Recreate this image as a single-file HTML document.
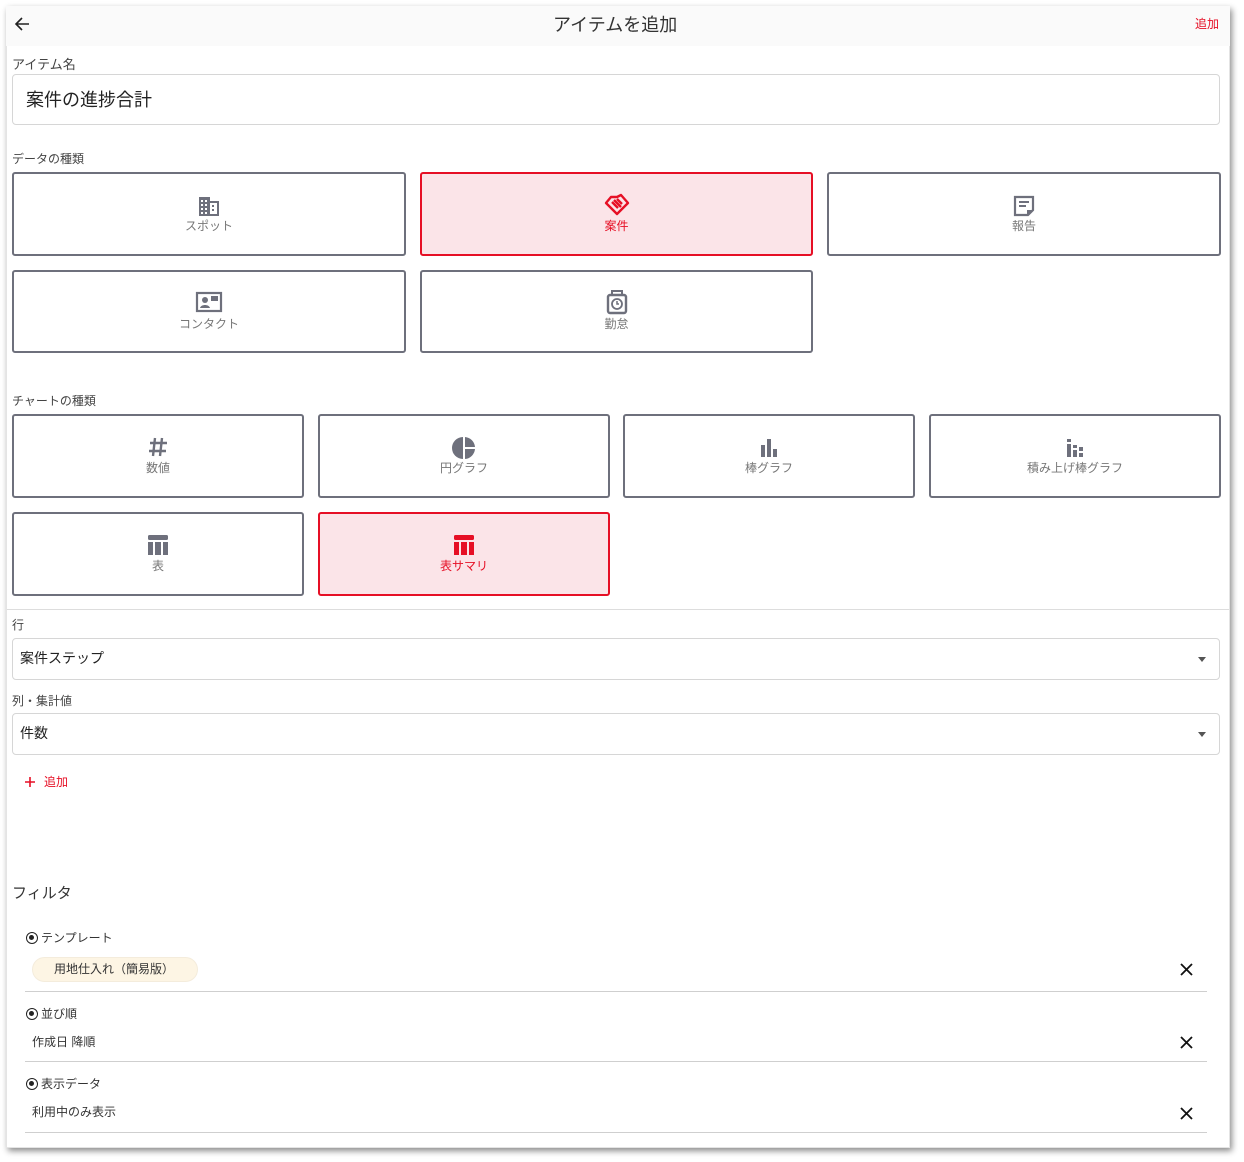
<!DOCTYPE html>
<html><head><meta charset="utf-8"><style>
*{margin:0;padding:0;box-sizing:border-box}
body{width:1244px;height:1162px;background:#fff;position:relative;overflow:hidden;font-family:"Liberation Sans","Noto Sans CJK JP",sans-serif;color:#333}
.card{position:absolute;left:6px;top:6px;width:1224px;height:1142px;background:#fff;box-shadow:2px 3px 6px rgba(0,0,0,.45);border:1px solid #e4e4e4}
.hdr{position:absolute;left:6px;top:6px;width:1224px;height:40px;background:#fafafa}
.a{position:absolute;white-space:nowrap}
.lbl{font-size:12px;color:#444}
.box{position:absolute;border:2px solid #6e707c;border-radius:3px;background:#fff;text-align:center;color:#777;font-size:12px}
.box.sel{border-color:#e60f25;background:#fbe4e8;color:#e60f25}
.box svg{position:absolute;left:50%;transform:translateX(-50%)}
.box span{position:absolute;left:0;right:0}
.sel-in{position:absolute;left:12px;width:1208px;height:42px;border:1px solid #d6d6d6;border-radius:4px;font-size:14px;padding:9px 7px;color:#222}
.sel-in:after{content:"";position:absolute;right:13px;top:18px;border-left:4px solid transparent;border-right:4px solid transparent;border-top:5px solid #555}
.line{position:absolute;left:25px;width:1182px;height:1px;background:#cfcfcf}
.rad{position:absolute;left:26px;width:12px;height:12px;border:1.5px solid #222;border-radius:50%}
.rad:after{content:"";position:absolute;left:2px;top:2px;width:5px;height:5px;border-radius:50%;background:#222}
.x{position:absolute;left:1180px}
</style></head><body>
<div class="card"></div>
<div class="hdr"></div>
<svg class="a" style="left:14px;top:16px" width="16" height="16" viewBox="0 0 16 16"><path d="M15 8H2M8 2L2 8l6 6" stroke="#222" stroke-width="1.6" fill="none"/></svg>
<div class="a" style="left:553px;top:11px;font-size:18px;color:#333">アイテムを追加</div>
<div class="a" style="left:1195px;top:15px;font-size:12px;color:#e60f25">追加</div>

<div class="a lbl" style="left:12px;top:54px;font-size:13px">アイテム名</div>
<div class="a" style="left:12px;top:74px;width:1208px;height:51px;border:1px solid #d6d6d6;border-radius:4px"></div>
<div class="a" style="left:26px;top:86px;font-size:18px;color:#222">案件の進捗合計</div>

<div class="a lbl" style="left:12px;top:150px">データの種類</div>
<div class="box" style="left:12px;top:172px;width:394px;height:84px">
<svg style="top:21px" width="24" height="22" viewBox="0 0 24 22"><path d="M2 2h11v4h9v15H2z" fill="#6e707c"/><g fill="#fff"><rect x="4" y="5" width="2" height="2"/><rect x="8" y="5" width="2" height="2"/><rect x="4" y="9" width="2" height="2"/><rect x="8" y="9" width="2" height="2"/><rect x="4" y="13" width="2" height="2"/><rect x="8" y="13" width="2" height="2"/><rect x="4" y="17" width="2" height="2"/><rect x="8" y="17" width="2" height="2"/><rect x="13" y="8" width="7" height="11"/></g><g fill="#6e707c"><rect x="15" y="10" width="2" height="2"/><rect x="15" y="14" width="2" height="2"/></g></svg>
<span style="top:43px">スポット</span></div>
<div class="box sel" style="left:420px;top:172px;width:393px;height:84px">
<svg style="top:19px" width="26" height="24" viewBox="0 0 26 24"><path d="M13 4l4-2 7 8-11 11-11-11 5-6 6 0z M8 9l6 6M10 7l7 7M13 6l5 5" stroke="#e60f25" stroke-width="2.4" fill="none" stroke-linejoin="round"/></svg>
<span style="top:43px">案件</span></div>
<div class="box" style="left:827px;top:172px;width:394px;height:84px">
<svg style="top:20px" width="24" height="24" viewBox="0 0 24 24"><path d="M3 3h18v13l-5 5H3z" fill="none" stroke="#6e707c" stroke-width="2.2"/><path d="M7 8h10M7 12h7" stroke="#6e707c" stroke-width="2"/><path d="M15 21v-5h6z" fill="#6e707c"/></svg>
<span style="top:43px">報告</span></div>
<div class="box" style="left:12px;top:270px;width:394px;height:83px">
<svg style="top:19px" width="28" height="22" viewBox="0 0 28 22"><rect x="2" y="2" width="24" height="18" fill="none" stroke="#6e707c" stroke-width="2.2"/><circle cx="10" cy="9" r="3" fill="#6e707c"/><path d="M5 17c1-4 9-4 10 0z" fill="#6e707c"/><rect x="16" y="5" width="7" height="5" fill="#6e707c"/></svg>
<span style="top:43px">コンタクト</span></div>
<div class="box" style="left:420px;top:270px;width:393px;height:83px">
<svg style="top:17px" width="22" height="26" viewBox="0 0 22 26"><rect x="6" y="2" width="10" height="4" fill="none" stroke="#6e707c" stroke-width="2"/><rect x="2" y="6" width="18" height="18" rx="2" fill="none" stroke="#6e707c" stroke-width="2.4"/><circle cx="11" cy="15" r="5" fill="none" stroke="#6e707c" stroke-width="1.8"/><path d="M11 12v3h2" stroke="#6e707c" stroke-width="1.5" fill="none"/></svg>
<span style="top:43px">勤怠</span></div>

<div class="a lbl" style="left:12px;top:392px">チャートの種類</div>
<div class="box" style="left:12px;top:414px;width:292px;height:84px">
<svg style="top:20px" width="22" height="22" viewBox="0 0 22 22"><path d="M8 2L6 20M15 2l-2 18M3 7h17M2 15h17" stroke="#6e707c" stroke-width="2.4" fill="none"/></svg>
<span style="top:43px">数値</span></div>
<div class="box" style="left:318px;top:414px;width:292px;height:84px">
<svg style="top:20px" width="24" height="24" viewBox="0 0 24 24"><path d="M11 1a11 11 0 0 0 0 22z" fill="#6e707c"/><path d="M13 1a11 11 0 0 1 10 10H13z M13 13h10a11 11 0 0 1-10 10z" fill="#6e707c"/></svg>
<span style="top:43px">円グラフ</span></div>
<div class="box" style="left:623px;top:414px;width:292px;height:84px">
<svg style="top:21px" width="22" height="22" viewBox="0 0 22 22"><rect x="3" y="8" width="4" height="12" fill="#6e707c"/><rect x="9" y="2" width="4" height="18" fill="#6e707c"/><rect x="15" y="12" width="4" height="8" fill="#6e707c"/></svg>
<span style="top:43px">棒グラフ</span></div>
<div class="box" style="left:929px;top:414px;width:292px;height:84px">
<svg style="top:21px" width="22" height="22" viewBox="0 0 22 22"><rect x="3" y="2" width="4" height="3" fill="#6e707c"/><rect x="3" y="7" width="4" height="13" fill="#6e707c"/><rect x="9" y="8" width="4" height="3" fill="#6e707c"/><rect x="9" y="13" width="4" height="7" fill="#6e707c"/><rect x="15" y="10" width="4" height="4" fill="#6e707c"/><rect x="15" y="16" width="4" height="4" fill="#6e707c"/></svg>
<span style="top:43px">積み上げ棒グラフ</span></div>
<div class="box" style="left:12px;top:512px;width:292px;height:84px">
<svg style="top:19px" width="24" height="24" viewBox="0 0 24 24"><rect x="2" y="2" width="20" height="5" rx="1.5" fill="#6e707c"/><rect x="2" y="9" width="5" height="13" fill="#6e707c"/><rect x="9" y="9" width="6" height="13" fill="#6e707c"/><rect x="17" y="9" width="5" height="13" fill="#6e707c"/></svg>
<span style="top:43px">表</span></div>
<div class="box sel" style="left:318px;top:512px;width:292px;height:84px">
<svg style="top:19px" width="24" height="24" viewBox="0 0 24 24"><rect x="2" y="2" width="20" height="5" rx="1.5" fill="#e60f25"/><rect x="2" y="9" width="5" height="13" fill="#e60f25"/><rect x="9" y="9" width="6" height="13" fill="#e60f25"/><rect x="17" y="9" width="5" height="13" fill="#e60f25"/></svg>
<span style="top:43px">表サマリ</span></div>

<div class="a" style="left:7px;top:609px;width:1222px;height:1px;background:#ddd"></div>
<div class="a lbl" style="left:12px;top:616px">行</div>
<div class="sel-in" style="top:638px">案件ステップ</div>
<div class="a lbl" style="left:12px;top:692px">列・集計値</div>
<div class="sel-in" style="top:713px">件数</div>
<svg class="a" style="left:24px;top:776px" width="12" height="12" viewBox="0 0 12 12"><path d="M6 1v10M1 6h10" stroke="#e60f25" stroke-width="1.6"/></svg>
<div class="a" style="left:44px;top:773px;font-size:12px;color:#e60f25">追加</div>

<div class="a" style="left:12px;top:882px;font-size:15px;color:#333">フィルタ</div>

<div class="rad" style="top:932px"></div>
<div class="a" style="left:41px;top:929px;font-size:12px">テンプレート</div>
<div class="a" style="left:32px;top:957px;width:166px;height:25px;border-radius:13px;background:#fdf5e4;border:1px solid #f4ecdc"></div>
<div class="a" style="left:54px;top:960px;font-size:12px;color:#333">用地仕入れ（簡易版）</div>
<svg class="x" style="top:963px" width="13" height="13" viewBox="0 0 13 13"><path d="M1 1l11 11M12 1L1 12" stroke="#111" stroke-width="1.8"/></svg>
<div class="line" style="top:991px"></div>

<div class="rad" style="top:1008px"></div>
<div class="a" style="left:41px;top:1005px;font-size:12px">並び順</div>
<div class="a" style="left:32px;top:1033px;font-size:12px">作成日 降順</div>
<svg class="x" style="top:1036px" width="13" height="13" viewBox="0 0 13 13"><path d="M1 1l11 11M12 1L1 12" stroke="#111" stroke-width="1.8"/></svg>
<div class="line" style="top:1061px"></div>

<div class="rad" style="top:1078px"></div>
<div class="a" style="left:41px;top:1075px;font-size:12px">表示データ</div>
<div class="a" style="left:32px;top:1103px;font-size:12px">利用中のみ表示</div>
<svg class="x" style="top:1107px" width="13" height="13" viewBox="0 0 13 13"><path d="M1 1l11 11M12 1L1 12" stroke="#111" stroke-width="1.8"/></svg>
<div class="line" style="top:1132px"></div>
</body></html>
